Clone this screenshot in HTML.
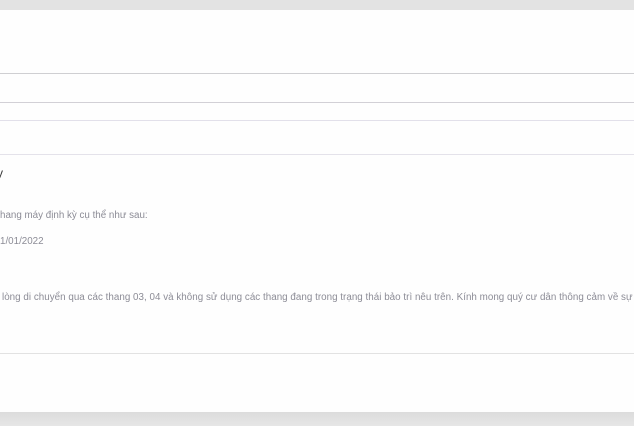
<!DOCTYPE html>
<html><head><meta charset="utf-8"><style>
html,body{margin:0;padding:0;width:634px;height:426px;overflow:hidden;background:#e3e3e3;font-family:"Liberation Sans",Arial,sans-serif;}
.card{position:absolute;left:0;top:10px;width:634px;height:402px;background:#fefefe;}
.l{position:absolute;left:0;width:634px;height:1px;}
.t{position:absolute;white-space:nowrap;font-size:9.8px;color:#8c8c96;}
.bot{position:absolute;left:0;top:412px;width:634px;height:14px;background:linear-gradient(#dcdcdc,#e6e6e6);}
</style></head><body>
<div class="card"></div>
<div class="l" style="top:73px;background:#cfcfd2"></div>
<div class="l" style="top:102px;background:#d2d0d6"></div>
<div class="l" style="top:120px;background:#e2e0ea"></div>
<div class="l" style="top:154px;background:#e4e2ea"></div>
<div class="l" style="top:353px;background:#e2e2e2"></div>
<div class="t" style="left:-3px;top:166px;font-size:12px;color:#333">y</div>
<div class="t" style="left:0;top:210px">hang máy định kỳ cụ thể như sau:</div>
<div class="t" style="left:0;top:236px">1/01/2022</div>
<div class="t" style="left:2px;top:292px;letter-spacing:0.03px">lòng di chuyển qua các thang 03, 04 và không sử dụng các thang đang trong trạng thái bảo trì nêu trên. Kính mong quý cư dân thông cảm về sự</div>
<div class="bot"></div>
</body></html>
